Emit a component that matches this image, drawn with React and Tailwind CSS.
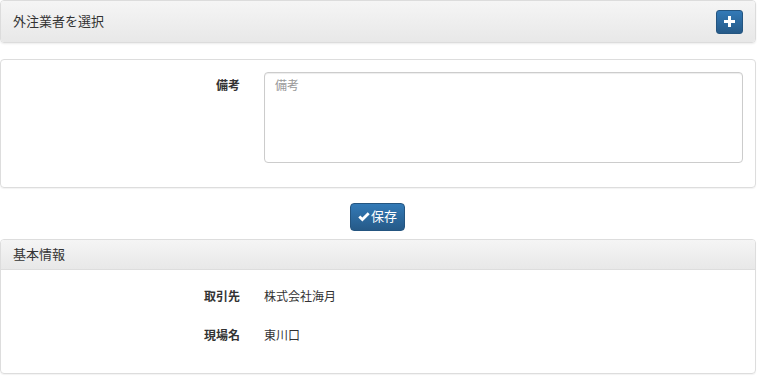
import React from "react";

const font = { fontFamily: '"Liberation Sans", "Noto Sans CJK JP", sans-serif' };

const PlusIcon = () => (
  <svg width="11" height="11" viewBox="0 0 11 11">
    <path d="M4 0h3v4h4v3H7v4H4V7H0V4h4z" fill="#fff" />
  </svg>
);

const CheckIcon = () => (
  <svg width="12" height="10" viewBox="0 0 12 10">
    <path d="M0.3 5.4 L2.3 3.4 L4.4 5.5 L9.7 0.2 L11.7 2.2 L4.4 9.5 Z" fill="#fff" />
  </svg>
);

const App = () => {
  return (
    <div className="w-[757px] h-[376px] bg-white text-[#333] overflow-hidden" style={font}>
      {/* 外注業者を選択 */}
      <div className="w-[756px] border border-[#dcdcdc] rounded-[4px] shadow-[0_1px_2px_rgba(0,0,0,0.08)]">
        <div className="h-[41px] flex items-center justify-between pl-3 pr-[12px] rounded-[3px] bg-gradient-to-b from-[#f5f5f5] to-[#e8e8e8]">
          <span className="text-[13px]">外注業者を選択</span>
          <button className="w-[27px] h-[24px] flex items-center justify-center rounded-[3px] border border-[#245580] bg-gradient-to-b from-[#337ab7] to-[#265a88]">
            <PlusIcon />
          </button>
        </div>
      </div>

      {/* 備考 */}
      <div className="mt-[16px] w-[756px] h-[129px] border border-[#dddddd] rounded-[4px] pt-[12px] shadow-[0_1px_1px_rgba(0,0,0,0.05)]">
        <div className="flex">
          <div className="w-[239px] text-right pt-[5px] text-[12px] font-bold">備考</div>
          <div className="ml-[24px] w-[479px] h-[91px] border border-[#cccccc] rounded-[4px] px-[10px] pt-[4px] text-[12px] text-[#999] shadow-[inset_0_1px_1px_rgba(0,0,0,0.075)]">
            備考
          </div>
        </div>
      </div>

      <div className="mt-[16px] flex justify-center">
        <button className="w-[55px] h-[28px] flex items-center justify-center gap-[1px] rounded-[4px] border border-[#245580] bg-gradient-to-b from-[#337ab7] to-[#265a88] text-white text-[13px] ml-[-2px] mt-[-1px]">
          <CheckIcon />
          <span>保存</span>
        </button>
      </div>

      {/* 基本情報 */}
      <div className="mt-[8px] w-[756px] h-[135px] border border-[#dddddd] rounded-[4px] shadow-[0_1px_1px_rgba(0,0,0,0.05)]">
        <div className="h-[30px] flex items-center pl-3 border-b border-[#dddddd] rounded-t-[3px] bg-gradient-to-b from-[#f5f5f5] to-[#e8e8e8]">
          <span className="text-[13px]">基本情報</span>
        </div>
        <div className="pt-[18px] flex flex-col gap-[22px] text-[12px]">
          <div className="flex h-[17px] items-center">
            <div className="w-[239px] text-right font-bold">取引先</div>
            <div className="ml-[24px]">株式会社海月</div>
          </div>
          <div className="flex h-[17px] items-center">
            <div className="w-[239px] text-right font-bold">現場名</div>
            <div className="ml-[24px]">東川口</div>
          </div>
        </div>
      </div>
    </div>
  );
};

export default App;
